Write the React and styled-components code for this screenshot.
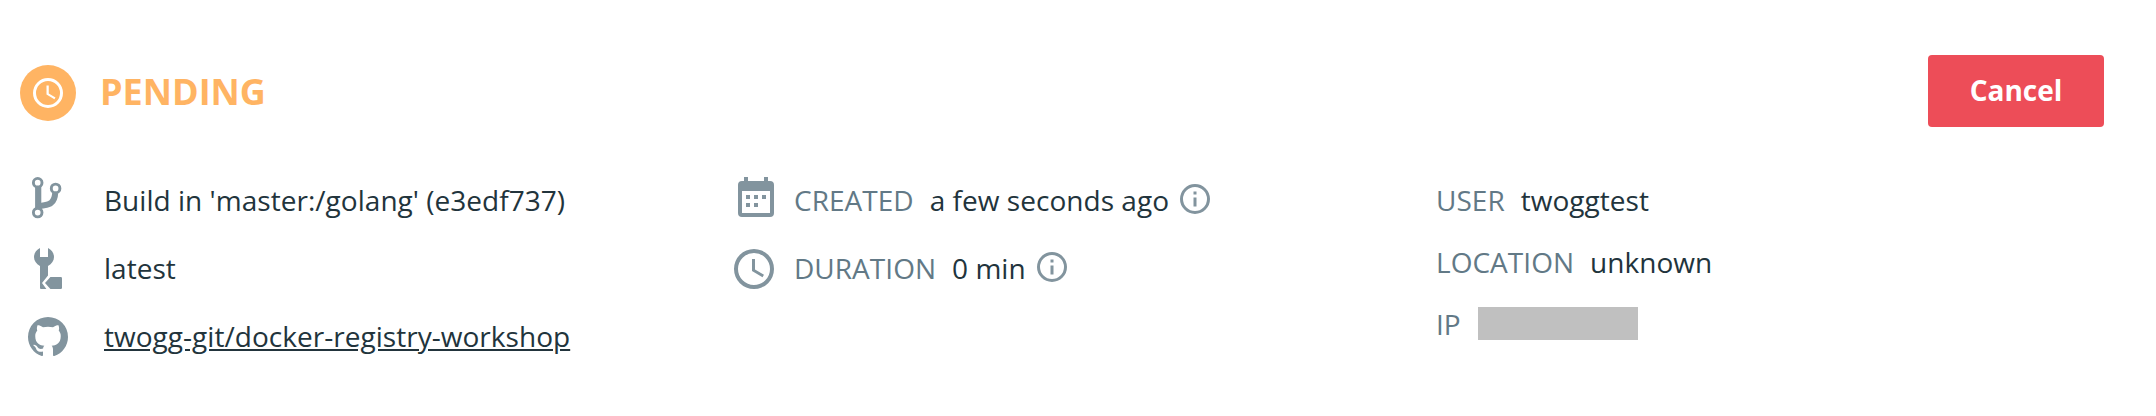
import React from "react";
import styled, { createGlobalStyle } from "styled-components";

const GlobalStyle = createGlobalStyle`
  *, *::before, *::after { box-sizing: border-box; }
  body {
    margin: 0;
    background: #fff;
    color: #22343c;
    font-family: "Open Sans", sans-serif;
    font-size: 28px;
    line-height: 38px;
    letter-spacing: 0.03px;
  }
`;

const Page = styled.main`
  height: 416px;
  padding: 55px 52px 0 20px;
`;

const Header = styled.header`
  display: flex;
  align-items: center;
  height: 72px;
`;

const StatusBadge = styled.span`
  display: flex;
  align-items: center;
  justify-content: center;
  width: 56px;
  height: 56px;
  margin-top: 4px;
  border-radius: 50%;
  background: #ffb463;
  color: #fff;
`;

const StatusText = styled.h1`
  margin: 2px auto 0 24px;
  font-size: 36px;
  line-height: 48px;
  font-weight: 700;
  letter-spacing: 0;
  color: #ffb463;
`;

const CancelButton = styled.button`
  width: 176px;
  height: 72px;
  padding: 0 0 2px;
  border: 0;
  border-radius: 4px;
  background: #ed4d58;
  color: #fff;
  font: 700 28px/38px "Open Sans", sans-serif;
`;

const Columns = styled.section`
  display: grid;
  grid-template-columns: 710px 706px 1fr;
  margin-top: 40px;
`;

const Column = styled.div`
  display: flex;
  flex-direction: column;
  gap: ${(p) => p.$gap}px;
  padding-top: ${(p) => p.$top || 0}px;
`;

const Row = styled.div`
  display: flex;
  align-items: center;
  height: ${(p) => p.$height || 48}px;
`;

const IconSlot = styled.span`
  display: flex;
  flex: none;
  margin: ${(p) => (p.$raised ? "0 14px 4px 2px" : "0 16px 0 0")};
  color: #82949e;
`;

const SourceIcon = styled(IconSlot)`
  margin: ${(p) => (p.$raised ? "0 32px 4px 4px" : "0 32px 0 4px")};
`;

const Value = styled.span`
  padding-bottom: 2px;
`;

const Label = styled(Value)`
  margin-right: 16px;
  color: #627986;
`;

const RepoLink = styled.a`
  padding-bottom: 2px;
  color: inherit;
  text-decoration: underline;
`;

const InfoSlot = styled.span`
  display: flex;
  margin: 0 0 4px 8px;
  color: #82949e;
`;

const Redacted = styled.span`
  width: 160px;
  height: 33px;
  margin: 0 0 3px 1px;
  background: #c0c0c0;
`;

const Icon = ({ size = 48, children }) => (
  <svg width={size} height={size} viewBox="0 0 24 24" fill="currentColor" aria-hidden="true">
    {children}
  </svg>
);

const ClockIcon = ({ size }) => (
  <Icon size={size}>
    <path d="M12 20a8 8 0 1 0 0-16 8 8 0 0 0 0 16m0-18a10 10 0 1 1 0 20 10 10 0 0 1 0-20m.5 5v5.25l4.5 2.67-.75 1.23L11 13V7h1.5Z" />
  </Icon>
);

const CalendarIcon = () => (
  <Icon>
    <path d="M19 19H5V8h14M16 1v2H8V1H6v2H5a2 2 0 0 0-2 2v14a2 2 0 0 0 2 2h14a2 2 0 0 0 2-2V5a2 2 0 0 0-2-2h-1V1M7 10h2v2H7zM11 10h2v2h-2zM15 10h2v2h-2zM7 14h2v2H7zM11 14h2v2h-2z" />
  </Icon>
);

const InfoIcon = () => (
  <Icon size={36}>
    <path d="M11 9h2V7h-2m1 13a8 8 0 1 1 0-16 8 8 0 0 1 0 16m0-18a10 10 0 1 0 0 20 10 10 0 0 0 0-20m-1 15h2v-6h-2v6Z" />
  </Icon>
);

const GithubIcon = () => (
  <Icon>
    <path d="M12 2A10 10 0 0 0 2 12c0 4.42 2.87 8.17 6.84 9.5.5.08.66-.23.66-.5v-1.69c-2.77.6-3.36-1.34-3.36-1.34-.46-1.16-1.11-1.47-1.11-1.47-.91-.62.07-.6.07-.6 1 .07 1.53 1.03 1.53 1.03.87 1.52 2.34 1.07 2.91.83.09-.65.35-1.09.63-1.34-2.22-.25-4.55-1.11-4.55-4.92 0-1.11.38-2 1.03-2.71-.1-.25-.45-1.29.1-2.64 0 0 .84-.27 2.75 1.02.79-.22 1.65-.33 2.5-.33s1.71.11 2.5.33c1.91-1.29 2.75-1.02 2.75-1.02.55 1.35.2 2.39.1 2.64.65.71 1.03 1.6 1.03 2.71 0 3.82-2.34 4.66-4.57 4.91.36.31.69.92.69 1.85V21c0 .27.16.59.67.5C19.14 20.16 22 16.42 22 12A10 10 0 0 0 12 2Z" />
  </Icon>
);

const BranchIcon = () => (
  <Icon>
    <g fill="none" stroke="currentColor">
      <path strokeWidth="3.1" d="M7.1 5.5v12" />
      <path strokeWidth="3" d="M7.1 16.3C8.5 14.4 11.5 15.8 13.6 13.9 15 12.7 15.5 11 15.6 9" />
      <g strokeWidth="1.45" fill="#fff">
        <circle cx="6.85" cy="3.85" r="2.15" />
        <circle cx="6.85" cy="18.8" r="2.15" />
        <circle cx="15.8" cy="6.7" r="2.15" />
      </g>
    </g>
  </Icon>
);

const WrenchIcon = () => (
  <Icon>
    <path d="M8 1.5V6h4V1.5c1.8.8 3 2.6 3 4.5 0 1.8-1.1 3.5-3 4.5v4.8L9 19l2.2 3H8.5a.5.5 0 0 1-.5-.5v-11c-1.9-1-3-2.7-3-4.5 0-1.9 1.2-3.7 3-4.5Z" />
    <path d="M13.2 16h5.2a.6.6 0 0 1 .6.6v4.8a.6.6 0 0 1-.6.6h-5.2l-2.7-3Z" />
  </Icon>
);

const Info = () => (
  <InfoSlot>
    <InfoIcon />
  </InfoSlot>
);

export default function App() {
  return (
    <>
      <GlobalStyle />
      <Page>
        <Header>
          <StatusBadge>
            <ClockIcon size={36} />
          </StatusBadge>
          <StatusText>PENDING</StatusText>
          <CancelButton type="button">Cancel</CancelButton>
        </Header>
        <Columns>
          <Column $gap={20} $top={10}>
            <Row>
              <SourceIcon $raised><BranchIcon /></SourceIcon>
              <Value>Build in 'master:/golang' (e3edf737)</Value>
            </Row>
            <Row>
              <SourceIcon><WrenchIcon /></SourceIcon>
              <Value>latest</Value>
            </Row>
            <Row>
              <SourceIcon><GithubIcon /></SourceIcon>
              <RepoLink>twogg-git/docker-registry-workshop</RepoLink>
            </Row>
          </Column>
          <Column $gap={20} $top={10}>
            <Row>
              <IconSlot $raised><CalendarIcon /></IconSlot>
              <Label>CREATED</Label>
              <Value>a few seconds ago</Value>
              <Info />
            </Row>
            <Row>
              <IconSlot><ClockIcon size={48} /></IconSlot>
              <Label>DURATION</Label>
              <Value>0 min</Value>
              <Info />
            </Row>
          </Column>
          <Column $gap={24} $top={15}>
            <Row $height={38}>
              <Label>USER</Label>
              <Value>twoggtest</Value>
            </Row>
            <Row $height={38}>
              <Label>LOCATION</Label>
              <Value>unknown</Value>
            </Row>
            <Row $height={38}>
              <Label>IP</Label>
              <Redacted />
            </Row>
          </Column>
        </Columns>
      </Page>
    </>
  );
}
